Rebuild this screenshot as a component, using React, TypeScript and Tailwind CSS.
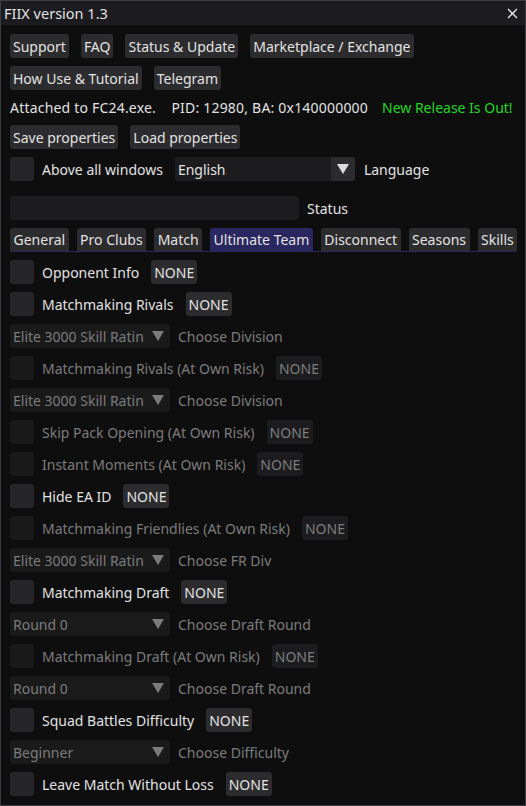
import React from 'react';

const font = { fontFamily: '"Noto Sans", "Open Sans", sans-serif' };

function Btn({ label, disabled }: { label: string; disabled?: boolean }) {
  return (
    <div
      className={
        'h-[24px] px-[3px] flex items-center rounded-[3px] whitespace-nowrap ' +
        (disabled ? 'bg-[#1c1c1e] text-[#7c7c7c]' : 'bg-[#2c2c2e] text-[#e2e2e2]')
      }
    >
      {label}
    </div>
  );
}

function Check({ disabled }: { disabled?: boolean }) {
  return (
    <div
      className={
        'w-[24px] h-[24px] rounded-[3px] shrink-0 ' + (disabled ? 'bg-[#19191a]' : 'bg-[#262628]')
      }
    />
  );
}

function Arrow({ color }: { color: string }) {
  return (
    <svg width="14" height="12" viewBox="0 0 14 12">
      <path d="M1 1 L13 1 L7 11 Z" fill={color} />
    </svg>
  );
}

function Combo({ value, disabled, className }: { value: string; disabled?: boolean; className: string }) {
  return (
    <div
      className={
        'h-[24px] flex items-center rounded-[3px] overflow-hidden shrink-0 ' +
        className +
        (disabled ? ' bg-[#1a1a1b]' : ' bg-[#1c1c1e]')
      }
    >
      <div className={'flex-1 px-[3px] whitespace-nowrap overflow-hidden ' + (disabled ? 'text-[#7c7c7c]' : 'text-[#e2e2e2]')}>
        {value}
      </div>
      <div className={'w-[24px] h-full flex items-center justify-center shrink-0 ' + (disabled ? '' : 'bg-[#2c2c2e]')}>
        <Arrow color={disabled ? '#7c7c7c' : '#dcdcdc'} />
      </div>
    </div>
  );
}

type Item =
  | { kind: 'check'; label: string; disabled?: boolean }
  | { kind: 'combo'; value: string; label: string };

const items: Item[] = [
  { kind: 'check', label: 'Opponent Info' },
  { kind: 'check', label: 'Matchmaking Rivals' },
  { kind: 'combo', value: 'Elite 3000 Skill Ratin', label: 'Choose Division' },
  { kind: 'check', label: 'Matchmaking Rivals (At Own Risk)', disabled: true },
  { kind: 'combo', value: 'Elite 3000 Skill Ratin', label: 'Choose Division' },
  { kind: 'check', label: 'Skip Pack Opening (At Own Risk)', disabled: true },
  { kind: 'check', label: 'Instant Moments (At Own Risk)', disabled: true },
  { kind: 'check', label: 'Hide EA ID' },
  { kind: 'check', label: 'Matchmaking Friendlies (At Own Risk)', disabled: true },
  { kind: 'combo', value: 'Elite 3000 Skill Ratin', label: 'Choose FR Div' },
  { kind: 'check', label: 'Matchmaking Draft' },
  { kind: 'combo', value: 'Round 0', label: 'Choose Draft Round' },
  { kind: 'check', label: 'Matchmaking Draft (At Own Risk)', disabled: true },
  { kind: 'combo', value: 'Round 0', label: 'Choose Draft Round' },
  { kind: 'check', label: 'Squad Battles Difficulty' },
  { kind: 'combo', value: 'Beginner', label: 'Choose Difficulty' },
  { kind: 'check', label: 'Leave Match Without Loss' },
];

const tabs = ['General', 'Pro Clubs', 'Match', 'Ultimate Team', 'Disconnect', 'Seasons', 'Skills'];

export default function App() {
  return (
    <div
      className="w-[526px] h-[806px] bg-[#0e0e0f] border border-[#3e3e42] overflow-hidden flex flex-col text-[14px] leading-[19px] text-[#e2e2e2]"
      style={font}
    >
      {/* Title bar */}
      <div className="h-[24px] bg-[#1b1b20] flex items-center justify-between pl-[3px] pr-[7px] shrink-0">
        <span className="text-[14.5px]">FIIX version 1.3</span>
        <svg width="11" height="11" viewBox="0 0 11 11">
          <path d="M1 1 L10 10 M10 1 L1 10" stroke="#e6e6e6" strokeWidth="1.4" />
        </svg>
      </div>

      <div className="flex flex-col px-[9px] pt-[9px]">
        <div className="flex gap-[12px]">
          <Btn label="Support" />
          <Btn label="FAQ" />
          <Btn label="Status & Update" />
          <Btn label="Marketplace / Exchange" />
        </div>
        <div className="flex gap-[12px] mt-[8px]">
          <Btn label="How Use & Tutorial" />
          <Btn label="Telegram" />
        </div>
        <div className="flex mt-[8px] h-[19px] items-center whitespace-nowrap">
          <span className="tracking-[0.2px]">Attached to FC24.exe.&nbsp;&nbsp;&nbsp; PID: 12980, BA: 0x140000000</span>
          <span className="ml-[14px] text-[#22d822]">New Release Is Out!</span>
        </div>
        <div className="flex gap-[12px] mt-[8px]">
          <Btn label="Save properties" />
          <Btn label="Load properties" />
        </div>
        <div className="flex items-center mt-[8px]">
          <Check />
          <span className="ml-[8px]">Above all windows</span>
          <Combo value="English" className="w-[180px] ml-[12px]" />
          <span className="ml-[9px]">Language</span>
        </div>
        <div className="flex items-center mt-[15px]">
          <div className="w-[289px] h-[24px] bg-[#1c1c1e] rounded-[3px]" />
          <span className="ml-[8px]">Status</span>
        </div>

        {/* Tabs */}
        <div className="flex gap-[8px] mt-[8px] border-b border-[#2a2760]">
          {tabs.map(t => (
            <div
              key={t}
              className={
                'h-[23px] px-[3.5px] flex items-center rounded-t-[3px] whitespace-nowrap ' +
                (t === 'Ultimate Team' ? 'bg-[#2a2760]' : 'bg-[#2c2c2e]')
              }
            >
              {t}
            </div>
          ))}
        </div>

        <div className="flex flex-col gap-[8px] mt-[8px]">
          {items.map((it, i) =>
            it.kind === 'check' ? (
              <div key={i} className="flex items-center h-[24px]">
                <Check disabled={it.disabled} />
                <span className={'ml-[8px] whitespace-nowrap ' + (it.disabled ? 'text-[#7c7c7c]' : '')}>
                  {it.label}
                </span>
                <div className="ml-[12px]">
                  <Btn label="NONE" disabled={it.disabled} />
                </div>
              </div>
            ) : (
              <div key={i} className="flex items-center h-[24px]">
                <Combo value={it.value} disabled className="w-[160px]" />
                <span className="ml-[8px] text-[#7c7c7c] whitespace-nowrap">{it.label}</span>
              </div>
            )
          )}
        </div>
      </div>
    </div>
  );
}
